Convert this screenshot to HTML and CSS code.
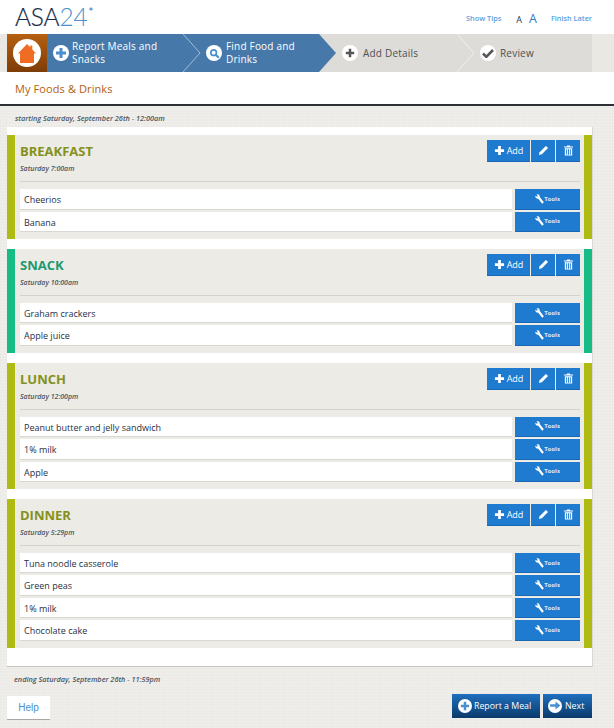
FILE: index.html
```html
<!DOCTYPE html>
<html lang="en">
<head>
<meta charset="utf-8">
<title>ASA24</title>
<link rel="stylesheet" href="styles.css">
</head>
<body>
<svg class="defs" width="0" height="0" aria-hidden="true">
  <symbol id="i-pencil" viewBox="0 0 12 12"><path d="M8.600 1 11 3.400 4.200 10.200 1 11 1.800 7.800Z" fill="#fff"/></symbol>
  <symbol id="i-trash" viewBox="0 0 12 12"><path d="M4.500 .5h3l.5 1h3v1.200H1V1.500h3ZM2 3.500h8V11.500H2ZM3.500 4.500v6h1v-6ZM5.500 4.500v6h1v-6ZM7.500 4.500v6h1v-6Z" fill="#fff" fill-rule="evenodd"/></symbol>
  <symbol id="i-wrench" viewBox="0 0 10 11"><path d="M.4 1.800 2.300 3 3.200 2.300 1.700.6C3.500-.3 5.400.6 5.300 3.200L9.800 9 8 10.800 3.600 5.200C1.500 5.400 0 4 .4 1.800Z" fill="#fff"/></symbol>
  <symbol id="i-plus" viewBox="0 0 12 12"><path d="M4.500 1h3v3.500H11v3H7.500V11h-3V7.500H1v-3h3.500Z" fill="currentColor"/></symbol>
</svg>
<header class="top">
  <div class="logo">ASA<span class="logo-num">24</span><span class="logo-star">*</span></div>
  <div class="top-links">
    <a class="top-link">Show Tips</a>
    <span class="sizes"><span class="size-a">A</span><span class="size-b">A</span></span>
    <a class="top-link">Finish Later</a>
  </div>
</header>
<nav class="steps">
  <div class="home">
    <span class="home-disc">
      <svg width="18" height="19" viewBox="0 0 22 20" preserveAspectRatio="none"><path d="M11 0 15 3.500V1.500H17.500V5.700L22 10H19.500V20H2.500V10H0Z" fill="#ef6c22"/></svg>
    </span>
  </div>
  <div class="step step-a">
    <span class="disc"><svg class="disc-i blue" width="12" height="12"><use href="#i-plus"/></svg></span>
    <span class="step-label">Report Meals and Snacks</span>
  </div>
  <div class="step step-b">
    <span class="disc"><svg width="11" height="11" viewBox="0 0 13 13"><circle cx="5.500" cy="5.500" r="3.300" fill="none" stroke="#4a90d0" stroke-width="2"/><path d="M8 8l3.500 3.500" stroke="#4a90d0" stroke-width="2.500"/></svg></span>
    <span class="step-label">Find Food and Drinks</span>
    <svg class="chev-blue" width="18" height="38" viewBox="0 0 18 38"><path d="M0 0 17 19 0 38Z" fill="#4679aa"/></svg>
  </div>
  <div class="step step-c">
    <span class="disc"><svg class="disc-i grey" width="10" height="10"><use href="#i-plus"/></svg></span>
    <span class="step-label">Add Details</span>
  </div>
  <div class="step step-d">
    <span class="disc"><svg width="12" height="10" viewBox="0 0 12 10"><path d="M1 5.500 4.300 8.800 11 2" fill="none" stroke="#565656" stroke-width="2.600"/></svg></span>
    <span class="step-label">Review</span>
  </div>
  <svg class="sep sep-1" width="20" height="38" viewBox="0 0 20 38"><path d="M1 0 18 19 1 38" fill="none" stroke="#a5bdd4" stroke-width="1"/></svg>
  <svg class="sep sep-2" width="20" height="38" viewBox="0 0 20 38"><path d="M1 0 18 19 1 38" fill="none" stroke="#f0efeb" stroke-width="1"/></svg>
</nav>
<div class="title-bar"><h1 class="page-title">My Foods &amp; Drinks</h1></div>
<main class="main">
  <p class="range range-start">starting Saturday, September 26th - 12:00am</p>
  <div class="panel">
    <section class="meal olive">
      <div class="meal-head">
        <div><h2 class="meal-name">BREAKFAST</h2><p class="meal-time">Saturday 7:00am</p></div>
        <div class="actions">
          <button class="btn btn-add"><svg width="11" height="11"><use href="#i-plus"/></svg>Add</button>
          <button class="btn btn-icon"><svg width="11" height="11"><use href="#i-pencil"/></svg></button>
          <button class="btn btn-icon"><svg width="11" height="11"><use href="#i-trash"/></svg></button>
        </div>
      </div>
      <div class="row"><div class="food">Cheerios</div><button class="tools"><svg width="9" height="10"><use href="#i-wrench"/></svg>Tools</button></div>
      <div class="row"><div class="food">Banana</div><button class="tools"><svg width="9" height="10"><use href="#i-wrench"/></svg>Tools</button></div>
    </section>
    <section class="meal green">
      <div class="meal-head">
        <div><h2 class="meal-name">SNACK</h2><p class="meal-time">Saturday 10:00am</p></div>
        <div class="actions">
          <button class="btn btn-add"><svg width="11" height="11"><use href="#i-plus"/></svg>Add</button>
          <button class="btn btn-icon"><svg width="11" height="11"><use href="#i-pencil"/></svg></button>
          <button class="btn btn-icon"><svg width="11" height="11"><use href="#i-trash"/></svg></button>
        </div>
      </div>
      <div class="row"><div class="food">Graham crackers</div><button class="tools"><svg width="9" height="10"><use href="#i-wrench"/></svg>Tools</button></div>
      <div class="row"><div class="food">Apple juice</div><button class="tools"><svg width="9" height="10"><use href="#i-wrench"/></svg>Tools</button></div>
    </section>
    <section class="meal olive">
      <div class="meal-head">
        <div><h2 class="meal-name">LUNCH</h2><p class="meal-time">Saturday 12:00pm</p></div>
        <div class="actions">
          <button class="btn btn-add"><svg width="11" height="11"><use href="#i-plus"/></svg>Add</button>
          <button class="btn btn-icon"><svg width="11" height="11"><use href="#i-pencil"/></svg></button>
          <button class="btn btn-icon"><svg width="11" height="11"><use href="#i-trash"/></svg></button>
        </div>
      </div>
      <div class="row"><div class="food">Peanut butter and jelly sandwich</div><button class="tools"><svg width="9" height="10"><use href="#i-wrench"/></svg>Tools</button></div>
      <div class="row"><div class="food">1% milk</div><button class="tools"><svg width="9" height="10"><use href="#i-wrench"/></svg>Tools</button></div>
      <div class="row"><div class="food">Apple</div><button class="tools"><svg width="9" height="10"><use href="#i-wrench"/></svg>Tools</button></div>
    </section>
    <section class="meal olive">
      <div class="meal-head">
        <div><h2 class="meal-name">DINNER</h2><p class="meal-time">Saturday 5:29pm</p></div>
        <div class="actions">
          <button class="btn btn-add"><svg width="11" height="11"><use href="#i-plus"/></svg>Add</button>
          <button class="btn btn-icon"><svg width="11" height="11"><use href="#i-pencil"/></svg></button>
          <button class="btn btn-icon"><svg width="11" height="11"><use href="#i-trash"/></svg></button>
        </div>
      </div>
      <div class="row"><div class="food">Tuna noodle casserole</div><button class="tools"><svg width="9" height="10"><use href="#i-wrench"/></svg>Tools</button></div>
      <div class="row"><div class="food">Green peas</div><button class="tools"><svg width="9" height="10"><use href="#i-wrench"/></svg>Tools</button></div>
      <div class="row"><div class="food">1% milk</div><button class="tools"><svg width="9" height="10"><use href="#i-wrench"/></svg>Tools</button></div>
      <div class="row"><div class="food">Chocolate cake</div><button class="tools"><svg width="9" height="10"><use href="#i-wrench"/></svg>Tools</button></div>
    </section>
  </div>
  <p class="range range-end">ending Saturday, September 26th - 11:59pm</p>
  <div class="foot">
    <a class="help">Help</a>
    <div class="foot-right">
      <button class="dark-btn dark-report"><span class="dark-disc"><svg class="disc-i blue" width="10" height="10"><use href="#i-plus"/></svg></span>Report a Meal</button>
      <button class="dark-btn dark-next"><span class="dark-disc"><svg width="11" height="9" viewBox="0 0 12 10"><path d="M0 3.500H6V.5L11.500 5 6 9.500V6.500H0Z" fill="#4a90d0"/></svg></span>Next</button>
    </div>
  </div>
</main>
</body>
</html>
```
FILE: styles.css
```css
* { box-sizing: border-box; }
html, body { margin: 0; padding: 0; }
body {
  font-family: "Open Sans", "Noto Sans", sans-serif;
  background-color: #edece8;
  background-image:
    repeating-linear-gradient(0deg, rgba(255,255,255,.16) 0 1px, transparent 1px 3px),
    repeating-linear-gradient(90deg, rgba(0,0,0,.01) 0 1px, transparent 1px 3px);
  height: 728px;
  overflow: hidden;
  position: relative;
}
.defs { position: absolute; }
.top {
  height: 34px;
  background: #fff;
  display: flex;
  justify-content: space-between;
  padding: 0 22px 0 15px;
}
.logo {
  font-family: "Lato", sans-serif;
  font-size: 24.500px;
  font-weight: 300;
  line-height: 34px;
  color: #152b48;
  letter-spacing: -.2px;
  -webkit-text-stroke: .2px #152b48;
}
.logo-num { color: #4a90d0; -webkit-text-stroke: 0; }
.logo-star { color: #4a90d0; font-size: 11px; line-height: 0; vertical-align: 10px; margin-left: 1px; font-weight: 700; -webkit-text-stroke: 0; }
.top-links { display: flex; align-items: center; padding-top: 2px; height: 34px; }
.top-link { font-size: 7.300px; font-weight: 600; color: #5a9ee0; }
.sizes { display: flex; align-items: baseline; gap: 7px; margin: 0 14px 0 15px; }
.size-a { font-size: 9px; color: #1f3555; }
.size-b { font-size: 12.500px; color: #2f78c8; }
.steps {
  height: 38px;
  display: flex;
  position: relative;
  padding: 0 22px 0 7px;
  background: #e9e8e3;
}
.home {
  width: 40px;
  flex: none;
  background: linear-gradient(#b55f10, #7d3d08);
  display: flex;
  align-items: center;
  justify-content: center;
}
.home-disc {
  width: 28px;
  height: 28px;
  border-radius: 50%;
  background: #fff;
  display: flex;
  align-items: center;
  justify-content: center;
}
.step {
  display: flex;
  flex: none;
  align-items: center;
  gap: 4px;
  font-size: 10px;
  line-height: 13px;
  letter-spacing: .2px;
  position: relative;
}
.step-a { width: 154px; padding-left: 6px; gap: 3px; background: #4679aa; color: #fff; }
.step-b { width: 118px; padding-left: 5px; background: #4679aa; color: #fff; }
.step-c { width: 137px; padding-left: 23px; gap: 5px; background: #dddcd8; color: #505050; }
.step-d { width: 136px; padding-left: 24px; background: #dddcd8; color: #505050; }
.step-a .step-label { width: 95px; }
.step-b .step-label { width: 85px; }
.chev-blue { position: absolute; left: 100%; top: 0; z-index: 2; }
.sep { position: absolute; top: 0; z-index: 3; }
.sep-1 { left: 182px; }
.sep-2 { left: 456px; }
.disc {
  width: 16px;
  height: 16px;
  border-radius: 50%;
  background: #fff;
  display: flex;
  align-items: center;
  justify-content: center;
  flex: none;
}
.disc-i.blue { color: #4a90d0; }
.disc-i.grey { color: #565656; }
.title-bar {
  height: 34px;
  background: #fff;
  border-bottom: 2px solid #2d3136;
  padding: 9px 15px 0;
}
.page-title {
  margin: 0;
  font-size: 11px;
  font-weight: 400;
  line-height: 16px;
  color: #b4600f;
  letter-spacing: .1px;
}
.main { padding: 0 22px 0 7px; }
.range {
  margin: 0;
  font-size: 7.300px;
  font-weight: 600;
  font-style: italic;
  color: #4b5663;
  line-height: 10px;
  padding-left: 8px;
}
.range-start { padding-top: 7px; height: 21px; }
.range-end { padding-top: 7px; height: 29px; padding-left: 7px; }
.panel {
  background: #fff;
  padding: 8px 0 18px;
  border-bottom: 1px solid #c4c4c0;
  border-right: 1px solid #d8d7d3;
  display: flex;
  flex-direction: column;
  gap: 9.830px;
  width: 586px;
}
.meal {
  background: #ecebe6;
  border-left: 8px solid;
  border-right: 8px solid;
  padding: 0 4px 5px 5px;
  width: 585px;
}
.olive { border-color: #afbb13; }
.olive .meal-name { color: #84911c; }
.green { border-color: #17bb85; }
.green .meal-name { color: #1d9a70; }
.meal-head {
  height: 47px;
  margin-bottom: 7px;
  border-bottom: 1px solid #d3d2cd;
  display: flex;
  justify-content: space-between;
  padding-top: 5px;
}
.meal-name {
  margin: 0;
  font-size: 13px;
  font-weight: 700;
  line-height: 22px;
  letter-spacing: 0;
}
.meal-time {
  margin: 1px 0 0;
  font-size: 7px;
  font-weight: 600;
  font-style: italic;
  color: #4b5663;
  line-height: 12px;
}
.actions { display: flex; gap: 1px; height: 22px; }
.btn {
  border: 0;
  border-bottom: 1px solid #1a68b5;
  background: #1e7bd0;
  color: #fff;
  height: 22px;
  padding: 0;
  font-family: inherit;
  display: flex;
  align-items: center;
  justify-content: center;
}
.btn-add { width: 43px; font-size: 9px; gap: 2px; }
.btn-icon { width: 24px; }
.row {
  display: flex;
  gap: 3px;
  height: 20.500px;
  margin-bottom: 2px;
}
.food {
  width: 492px;
  background: #fff;
  border-bottom: 1px solid #d8d7d2;
  font-size: 9px;
  line-height: 21px;
  padding-left: 4px;
  color: #1f3045;
}
.tools {
  width: 65px;
  border: 0;
  border-bottom: 1px solid #1a68b5;
  background: #1e7bd0;
  color: #d8e8f7;
  font-family: inherit;
  font-size: 6px;
  font-weight: 700;
  padding: 0;
  display: flex;
  align-items: center;
  justify-content: center;
  gap: 0;
}
.foot { display: flex; justify-content: space-between; width: 585px; }
.help {
  width: 43px;
  height: 24px;
  background: #fff;
  border-bottom: 1px solid #a8a8a5;
  font-family: "Liberation Sans", sans-serif;
  font-size: 10px;
  line-height: 24px;
  text-align: center;
  color: #4a90d0;
}
.foot-right { display: flex; gap: 3px; margin-top: -2px; }
.dark-btn {
  height: 24px;
  border: 0;
  padding: 0 0 0 6px;
  background: linear-gradient(#1e6fbe, #0a3a6a);
  color: #fff;
  font-family: inherit;
  font-size: 8.800px;
  display: flex;
  align-items: center;
  gap: 2px;
}
.dark-report { width: 88px; }
.dark-next { width: 49px; padding-left: 5px; gap: 3px; }
.dark-disc {
  width: 14px;
  height: 14px;
  border-radius: 50%;
  background: #fff;
  display: flex;
  align-items: center;
  justify-content: center;
  flex: none;
}
```
